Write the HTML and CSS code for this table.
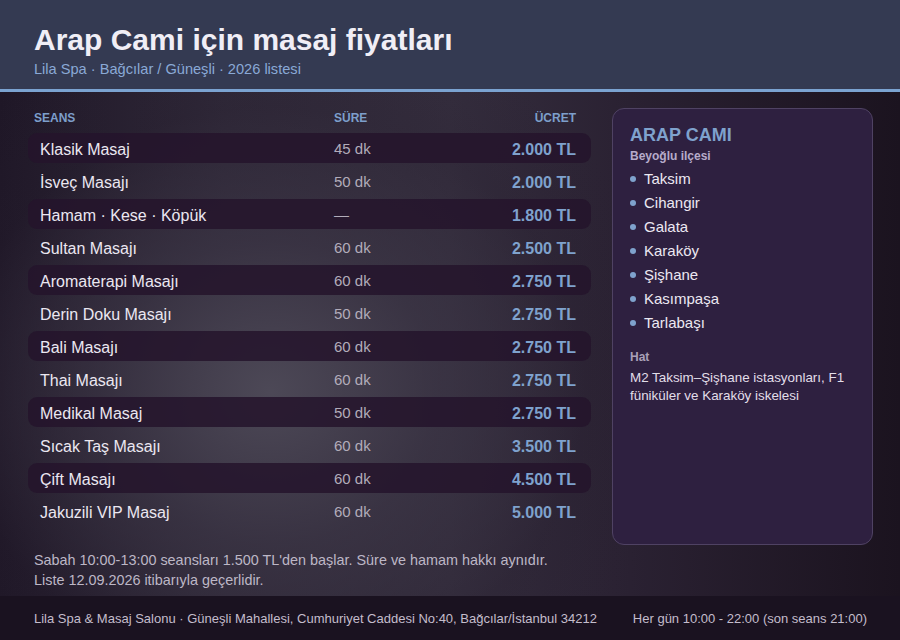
FILE: index.html
```html
<!DOCTYPE html>
<html lang="tr">
<head>
<meta charset="utf-8">
<title>Arap Cami için masaj fiyatları</title>
<link rel="stylesheet" href="styles.css">
</head>
<body>
<div class="page">
  <header class="hero">
    <h1 class="title">Arap Cami için masaj fiyatları</h1>
    <p class="subtitle">Lila Spa · Bağcılar / Güneşli · 2026 listesi</p>
  </header>
  <main class="main">
    <section class="prices">
      <div class="thead">
        <span class="c-name">SEANS</span>
        <span class="c-dur">SÜRE</span>
        <span class="c-price">ÜCRET</span>
      </div>
      <div class="rows">
        <div class="row alt"><span class="c-name">Klasik Masaj</span><span class="c-dur">45 dk</span><span class="c-price">2.000 TL</span></div>
        <div class="row"><span class="c-name">İsveç Masajı</span><span class="c-dur">50 dk</span><span class="c-price">2.000 TL</span></div>
        <div class="row alt"><span class="c-name">Hamam · Kese · Köpük</span><span class="c-dur">—</span><span class="c-price">1.800 TL</span></div>
        <div class="row"><span class="c-name">Sultan Masajı</span><span class="c-dur">60 dk</span><span class="c-price">2.500 TL</span></div>
        <div class="row alt"><span class="c-name">Aromaterapi Masajı</span><span class="c-dur">60 dk</span><span class="c-price">2.750 TL</span></div>
        <div class="row"><span class="c-name">Derin Doku Masajı</span><span class="c-dur">50 dk</span><span class="c-price">2.750 TL</span></div>
        <div class="row alt"><span class="c-name">Bali Masajı</span><span class="c-dur">60 dk</span><span class="c-price">2.750 TL</span></div>
        <div class="row"><span class="c-name">Thai Masajı</span><span class="c-dur">60 dk</span><span class="c-price">2.750 TL</span></div>
        <div class="row alt"><span class="c-name">Medikal Masaj</span><span class="c-dur">50 dk</span><span class="c-price">2.750 TL</span></div>
        <div class="row"><span class="c-name">Sıcak Taş Masajı</span><span class="c-dur">60 dk</span><span class="c-price">3.500 TL</span></div>
        <div class="row alt"><span class="c-name">Çift Masajı</span><span class="c-dur">60 dk</span><span class="c-price">4.500 TL</span></div>
        <div class="row"><span class="c-name">Jakuzili VIP Masaj</span><span class="c-dur">60 dk</span><span class="c-price">5.000 TL</span></div>
      </div>
      <div class="notes">
        <p>Sabah 10:00-13:00 seansları 1.500 TL'den başlar. Süre ve hamam hakkı aynıdır.</p>
        <p>Liste 12.09.2026 itibarıyla geçerlidir.</p>
      </div>
    </section>
    <aside class="card">
      <h2 class="card-title">ARAP CAMI</h2>
      <div class="card-label">Beyoğlu ilçesi</div>
      <ul class="areas">
        <li>Taksim</li>
        <li>Cihangir</li>
        <li>Galata</li>
        <li>Karaköy</li>
        <li>Şişhane</li>
        <li>Kasımpaşa</li>
        <li>Tarlabaşı</li>
      </ul>
      <div class="card-label hat">Hat</div>
      <p class="transit">M2 Taksim–Şişhane istasyonları, F1 füniküler ve Karaköy iskelesi</p>
    </aside>
  </main>
  <footer class="foot">
    <span>Lila Spa &amp; Masaj Salonu · Güneşli Mahallesi, Cumhuriyet Caddesi No:40, Bağcılar/İstanbul 34212</span>
    <span>Her gün 10:00 - 22:00 (son seans 21:00)</span>
  </footer>
</div>
</body>
</html>
```

FILE: styles.css
```css
* { box-sizing: border-box; }
html, body { margin: 0; padding: 0; }
body {
  width: 900px;
  height: 640px;
  overflow: hidden;
  font-family: "Liberation Sans", Arial, sans-serif;
  background: #1a1220;
  color: #e8e4ee;
}
.page {
  display: flex;
  flex-direction: column;
  height: 640px;
}
.hero {
  height: 92px;
  flex: none;
  background: #343a52;
  border-bottom: 3px solid #7ba3d1;
  padding: 23px 34px 0;
}
.title {
  margin: 0;
  font-size: 30px;
  line-height: 34px;
  font-weight: 700;
  color: #f0eef6;
}
.subtitle {
  margin: 4px 0 0;
  font-size: 14.6px;
  line-height: 17px;
  color: #8aa9d6;
}
.main {
  flex: 1;
  display: flex;
  gap: 21px;
  padding: 16px 27px 0 28px;
  background:
    radial-gradient(ellipse 420px 380px at 270px 300px, rgba(78,74,88,0.95) 0%, rgba(60,54,70,0.7) 40%, rgba(40,32,48,0.2) 75%, rgba(26,18,31,0) 100%),
    linear-gradient(90deg, #1f1727 0%, #2f2838 25%, #342d3d 50%, #2a2132 70%, #1b131f 100%);
}
.prices {
  width: 563px;
  display: flex;
  flex-direction: column;
}
.thead {
  display: flex;
  padding: 3px 15px 0 6px;
  height: 25px;
  font-size: 12px;
  font-weight: 700;
  color: #7d9fcb;
}
.thead .c-name { width: 300px; }
.c-dur { flex: 1; }
.c-price { text-align: right; }
.rows {
  display: flex;
  flex-direction: column;
  gap: 3px;
}
.row {
  display: flex;
  align-items: center;
  height: 30px;
  padding: 4px 15px 0 12px;
  border-radius: 9px;
  font-size: 16px;
}
.row.alt { background: rgba(36, 20, 44, 0.85); }
.row .c-name { width: 294px; color: #ebe7f1; }
.row .c-dur { font-size: 15px; color: #b2acba; margin-top: -3px; }
.row .c-price { font-weight: 700; color: #7fa2cd; }
.notes {
  margin-top: 24px;
  padding-left: 6px;
  font-size: 14.4px;
  line-height: 20px;
  color: #bdb7c6;
}
.notes p { margin: 0; }
.card {
  width: 261px;
  height: 437px;
  background: #2e2040;
  border: 1px solid #4f4263;
  border-radius: 12px;
  padding: 16px 17px;
}
.card-title {
  margin: 0;
  font-size: 18px;
  line-height: 20px;
  font-weight: 700;
  color: #7fa2cd;
}
.card-label {
  margin-top: 3px;
  font-size: 12px;
  line-height: 16px;
  font-weight: 700;
  color: #b6accb;
}
.areas {
  list-style: none;
  margin: 2px 0 0;
  padding: 0;
}
.areas li {
  display: flex;
  align-items: center;
  height: 24px;
  font-size: 15px;
  color: #ece8f2;
}
.areas li::before {
  content: "";
  width: 6px;
  height: 6px;
  border-radius: 50%;
  background: #7fa2cd;
  margin: 2px 8px 0 0;
  flex: none;
}
.card-label.hat { margin-top: 15px; color: #aaa0b8; }
.transit {
  margin: 4px 0 0;
  font-size: 13.4px;
  line-height: 18px;
  color: #e2dee9;
}
.foot {
  height: 44px;
  flex: none;
  background: #1a1220;
  display: flex;
  justify-content: space-between;
  align-items: center;
  padding: 0 33px 0 34px;
  font-size: 13px;
  color: #c4bdcc;
}
```
